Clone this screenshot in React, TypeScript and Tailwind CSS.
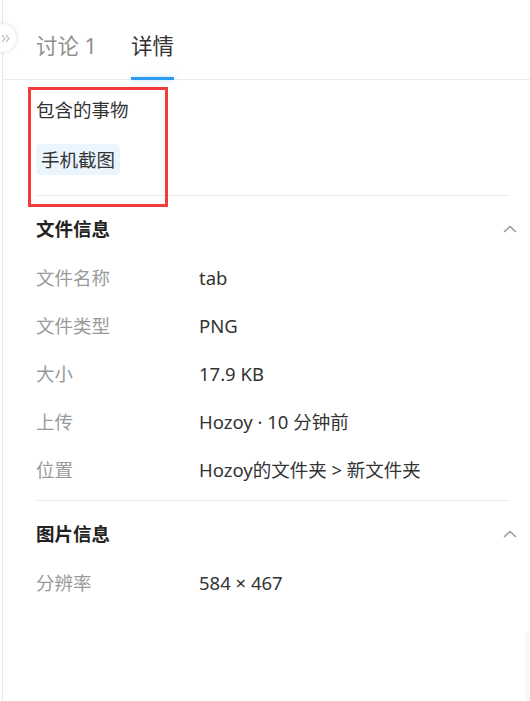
const rows = [
  { label: '文件名称', value: 'tab' },
  { label: '文件类型', value: 'PNG' },
  { label: '大小', value: '17.9 KB' },
  { label: '上传', value: 'Hozoy · 10 分钟前' },
  { label: '位置', value: 'Hozoy的文件夹 > 新文件夹' },
];

function ChevronUp() {
  return (
    <svg width="14" height="8" viewBox="0 0 14 8" fill="none">
      <polyline points="1,7 7,1.5 13,7" stroke="#9a9a9a" strokeWidth="1.6" />
    </svg>
  );
}

function InfoRow({ label, value }: { label: string; value: string }) {
  return (
    <div className="flex h-[48px] items-center pt-[2px] text-[18.5px]">
      <span className="w-[163px] text-[#9a9a9a]">{label}</span>
      <span className="text-[#333]">{value}</span>
    </div>
  );
}

function SectionHeader({ title }: { title: string }) {
  return (
    <div className="flex items-center justify-between pt-[21px] pb-[12px] mr-[-8px]">
      <span className="text-[18.5px] leading-[24px] font-bold text-[#222]">{title}</span>
      <ChevronUp />
    </div>
  );
}

export default function App() {
  return (
    <div
      className="relative w-[530px] h-[701px] overflow-hidden bg-white"
      style={{ fontFamily: '"Noto Sans", "Noto Sans CJK SC", sans-serif' }}
    >
      <div className="ml-[2px] h-full border-l border-[#e8e8e8]">
        {/* tabs */}
        <div className="flex h-[80px] items-stretch gap-[34px] border-b border-[#ececec] pl-[33px]">
          <div className="flex items-center pt-[14px] text-[21.5px] text-[#8f8f8f]">讨论 1</div>
          <div className="relative flex items-center pt-[14px] text-[21.5px] text-[#333]">
            详情
            <div className="absolute bottom-[-1px] left-0 right-0 h-[3px] bg-[#2a9bf0] shadow-[0_0_6px_rgba(42,155,240,0.35)]" />
          </div>
        </div>

        <div className="pl-[33px] pr-[21px]">
          {/* contained things */}
          <div className="pt-[18px] pb-[20px]">
            <div className="text-[18.5px] leading-[24px] text-[#333]">包含的事物</div>
            <div className="mt-[22px] inline-flex h-[31px] items-center rounded-[5px] bg-[#eaf5fd] px-[5px] text-[18.5px] text-[#333]">
              手机截图
            </div>
          </div>

          <div className="border-t border-[#ececec] pb-[7px]">
            <SectionHeader title="文件信息" />
            {rows.map((r) => (
              <InfoRow key={r.label} label={r.label} value={r.value} />
            ))}
          </div>

          <div className="border-t border-[#ececec]">
            <SectionHeader title="图片信息" />
            <InfoRow label="分辨率" value="584 × 467" />
          </div>
        </div>
      </div>

      {/* collapse handle */}
      <div className="absolute left-[-12px] top-[24px] flex h-[28px] w-[28px] items-center justify-end rounded-full bg-white pr-[5px] shadow-[0_0_5px_rgba(0,0,0,0.14)]">
        <svg width="10" height="9" viewBox="0 0 10 9" fill="none">
          <polyline points="1,1 4,4.5 1,8" stroke="#c4c4c4" strokeWidth="1.3" />
          <polyline points="5,1 8,4.5 5,8" stroke="#c4c4c4" strokeWidth="1.3" />
        </svg>
      </div>

      {/* annotation box */}
      <div className="absolute left-[28px] top-[87px] h-[120px] w-[140px] border-[3px] border-[#f23b3b]" />

      {/* faint scroll edge */}
      <div className="absolute right-0 top-[632px] h-[69px] w-[5px] bg-[#f8f8f8]" />
    </div>
  );
}
